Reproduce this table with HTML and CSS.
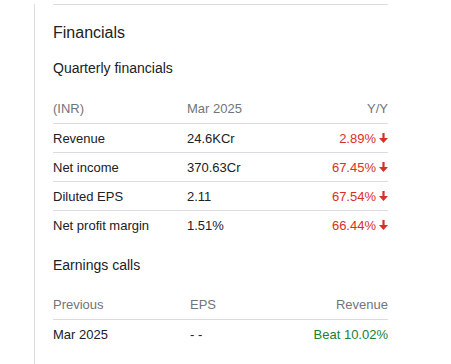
FILE: index.html
```html
<!DOCTYPE html>
<html lang="en">
<head>
<meta charset="utf-8">
<title>Financials</title>
<link rel="stylesheet" href="styles.css">
</head>
<body>
<div class="panel">
  <div class="divider"></div>
  <h2 class="title">Financials</h2>
  <h3 class="subtitle">Quarterly financials</h3>
  <div class="table fin">
    <div class="row head">
      <div>(INR)</div><div>Mar 2025</div><div class="r">Y/Y</div>
    </div>
    <div class="row">
      <div>Revenue</div><div>24.6KCr</div>
      <div class="r neg">2.89%<svg class="arrow" viewBox="0 0 9 10"><path d="M3.4 0h2.2v5h3.4L4.5 10 0 5h3.4z"/></svg></div>
    </div>
    <div class="row">
      <div>Net income</div><div>370.63Cr</div>
      <div class="r neg">67.45%<svg class="arrow" viewBox="0 0 9 10"><path d="M3.4 0h2.2v5h3.4L4.5 10 0 5h3.4z"/></svg></div>
    </div>
    <div class="row">
      <div>Diluted EPS</div><div>2.11</div>
      <div class="r neg">67.54%<svg class="arrow" viewBox="0 0 9 10"><path d="M3.4 0h2.2v5h3.4L4.5 10 0 5h3.4z"/></svg></div>
    </div>
    <div class="row last">
      <div>Net profit margin</div><div>1.51%</div>
      <div class="r neg">66.44%<svg class="arrow" viewBox="0 0 9 10"><path d="M3.4 0h2.2v5h3.4L4.5 10 0 5h3.4z"/></svg></div>
    </div>
  </div>
  <h3 class="subtitle earn">Earnings calls</h3>
  <div class="table calls">
    <div class="row head">
      <div>Previous</div><div>EPS</div><div class="r">Revenue</div>
    </div>
    <div class="row last">
      <div>Mar 2025</div><div>- -</div><div class="r pos">Beat 10.02%</div>
    </div>
  </div>
</div>
</body>
</html>
```
FILE: styles.css
```css
html, body {
  margin: 0;
  padding: 0;
  background: #fff;
}
body {
  font-family: "Liberation Sans", Arial, sans-serif;
  color: #202124;
}
.panel {
  margin-left: 34px;
  border-left: 1px solid #dadce0;
  padding-left: 18px;
  width: 335px;
  min-height: 364px;
  box-sizing: content-box;
}
.divider {
  height: 1px;
  background: #dadce0;
  margin-top: 4px;
}
.title {
  margin: 18px 0 0;
  font-size: 16px;
  font-weight: 400;
  line-height: 20px;
}
.subtitle {
  margin: 15px 0 0;
  font-size: 14px;
  font-weight: 400;
  line-height: 20px;
}
.subtitle.earn {
  margin-top: 16px;
}
.table {
  margin-top: 23px;
  font-size: 13px;
  line-height: 15px;
}
.calls {
  margin-top: 22px;
}
.row {
  display: grid;
  grid-template-columns: 134px 1fr auto;
  align-items: center;
  height: 28px;
  border-bottom: 1px solid #dadce0;
}
.calls .row {
  grid-template-columns: 137px 1fr auto;
}
.row.head {
  height: 22px;
  align-items: start;
  color: #70757a;
}
.row.last {
  border-bottom: none;
}
.r {
  text-align: right;
  display: flex;
  align-items: center;
  justify-content: flex-end;
}
.neg {
  color: #d93025;
}
.pos {
  color: #188038;
}
.arrow {
  width: 9px;
  height: 10px;
  margin-left: 3px;
  fill: #d93025;
}
```
